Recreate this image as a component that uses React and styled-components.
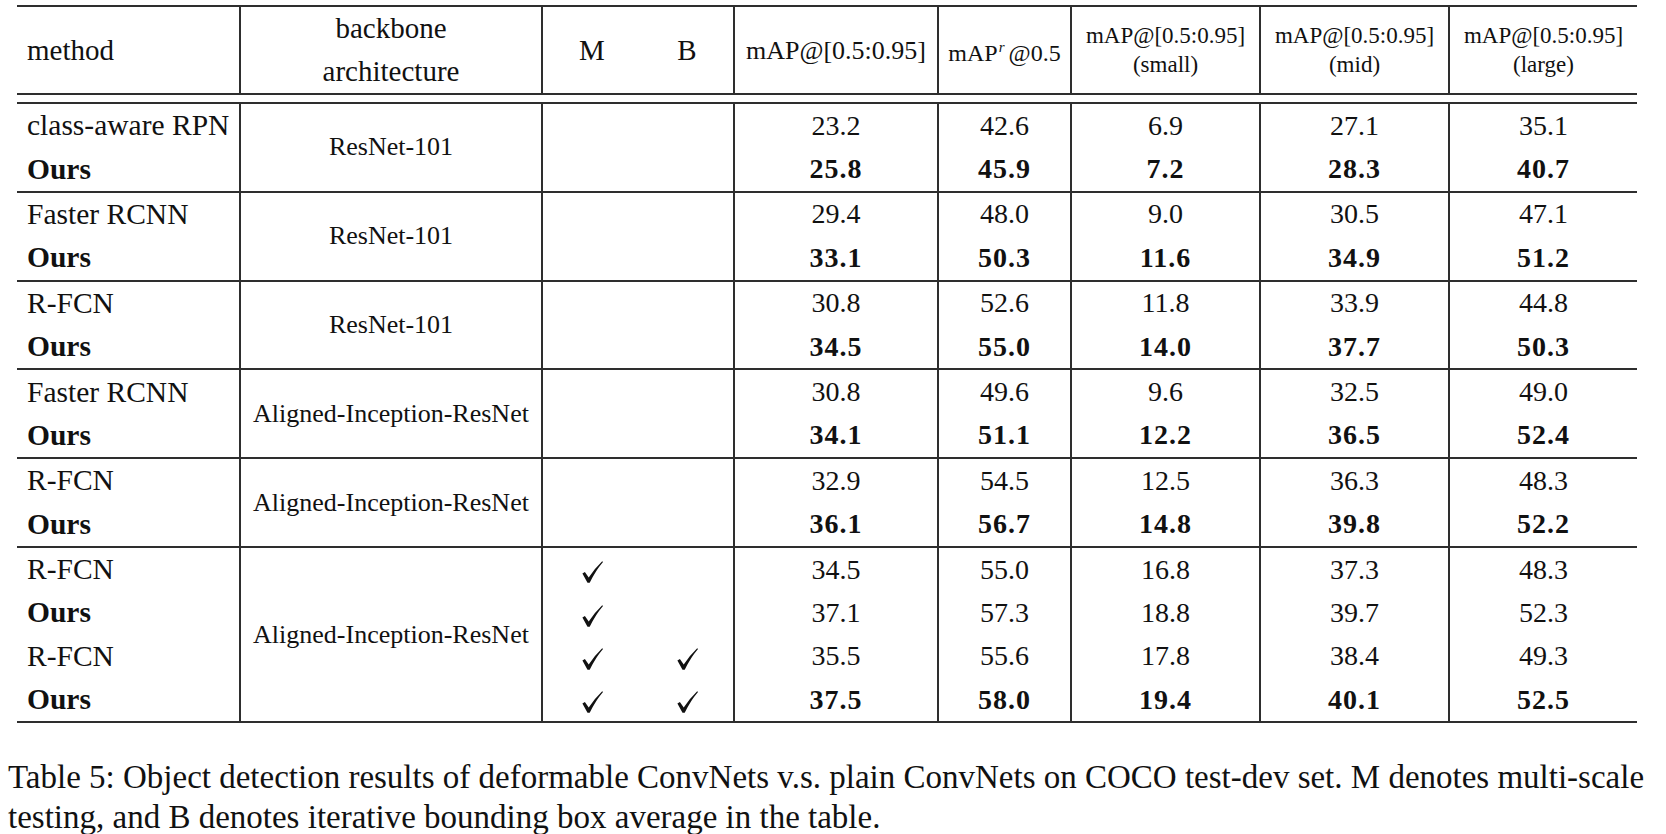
import React from 'react';
import styled, { createGlobalStyle } from 'styled-components';

const GlobalStyle = createGlobalStyle`
  body {
    margin: 0;
    background: #fff;
    color: #111;
    font-family: "Liberation Serif", "Times New Roman", serif;
  }
`

const LINE = '2px solid #2e2e2e';

const Page = styled.div`
  padding: 5px 0 0 8px;
`

const Table = styled.table`
  margin-left: 9px;
  width: 1620px;
  table-layout: fixed;
  border-collapse: separate;
  border-spacing: 0;
`

const HeadCell = styled.th`
  box-sizing: border-box;
  height: 90px;
  padding: 0 ${p => (p.$left ? '10px' : '0')};
  border-top: ${LINE};
  border-bottom: ${LINE};
  border-right: ${p => (p.$noRight ? 'none' : LINE)};
  font-weight: normal;
  font-size: ${p => p.$size || 29}px;
  line-height: ${p => p.$lh || 43}px;
  text-align: ${p => (p.$left ? 'left' : 'center')};
  vertical-align: middle;
  white-space: nowrap;
`

const Spacer = styled.td`
  height: 7px;
  padding: 0;
`

const Cell = styled.td`
  box-sizing: border-box;
  height: ${p => 43.4 + (p.$top ? 2 : 0) + (p.$bottom ? 2 : 0)}px;
  padding: 0 ${p => (p.$left ? '10px' : '0')};
  border-top: ${p => (p.$top ? LINE : 'none')};
  border-bottom: ${p => (p.$bottom ? LINE : 'none')};
  border-right: ${p => (p.$noRight ? 'none' : LINE)};
  font-size: ${p => p.$size || 28}px;
  font-weight: ${p => (p.$bold ? 'bold' : 'normal')};
  letter-spacing: ${p => (p.$bold && !p.$left ? '1px' : '0')};
  text-align: ${p => (p.$left ? 'left' : 'center')};
  vertical-align: middle;
  white-space: nowrap;
`

const Sup = styled.sup`
  font-size: 15px;
  font-style: italic;
  vertical-align: 9px;
  margin: 0 4px 0 1px;
`

const Caption = styled.p`
  margin: 34px 0 0;
  font-size: 33px;
  line-height: 40px;
  white-space: nowrap;
`

const CheckMark = () => (
  <svg width="21" height="22" viewBox="0 0 21 22" style={{ verticalAlign: 'middle' }}>
    <path
      d="M0.4 12.6 L2.9 11.1 L6.7 16.6 Q12 8 20.2 0.2 L21 1 Q13.6 9.6 7.7 21.8 L5.5 21.8 Z"
      fill="#111"
    />
  </svg>
);

const widths = [224, 302, 98, 94, 204, 133, 189, 189, 187];

const groups = [
  {
    backbone: 'ResNet-101',
    rows: [
      { method: 'class-aware RPN', vals: ['23.2', '42.6', '6.9', '27.1', '35.1'] },
      { method: 'Ours', ours: true, bold: true, vals: ['25.8', '45.9', '7.2', '28.3', '40.7'] },
    ],
  },
  {
    backbone: 'ResNet-101',
    rows: [
      { method: 'Faster RCNN', vals: ['29.4', '48.0', '9.0', '30.5', '47.1'] },
      { method: 'Ours', ours: true, bold: true, vals: ['33.1', '50.3', '11.6', '34.9', '51.2'] },
    ],
  },
  {
    backbone: 'ResNet-101',
    rows: [
      { method: 'R-FCN', vals: ['30.8', '52.6', '11.8', '33.9', '44.8'] },
      { method: 'Ours', ours: true, bold: true, vals: ['34.5', '55.0', '14.0', '37.7', '50.3'] },
    ],
  },
  {
    backbone: 'Aligned-Inception-ResNet',
    rows: [
      { method: 'Faster RCNN', vals: ['30.8', '49.6', '9.6', '32.5', '49.0'] },
      { method: 'Ours', ours: true, bold: true, vals: ['34.1', '51.1', '12.2', '36.5', '52.4'] },
    ],
  },
  {
    backbone: 'Aligned-Inception-ResNet',
    rows: [
      { method: 'R-FCN', vals: ['32.9', '54.5', '12.5', '36.3', '48.3'] },
      { method: 'Ours', ours: true, bold: true, vals: ['36.1', '56.7', '14.8', '39.8', '52.2'] },
    ],
  },
  {
    backbone: 'Aligned-Inception-ResNet',
    rows: [
      { method: 'R-FCN', m: true, vals: ['34.5', '55.0', '16.8', '37.3', '48.3'] },
      { method: 'Ours', ours: true, m: true, vals: ['37.1', '57.3', '18.8', '39.7', '52.3'] },
      { method: 'R-FCN', m: true, b: true, vals: ['35.5', '55.6', '17.8', '38.4', '49.3'] },
      { method: 'Ours', ours: true, m: true, b: true, bold: true, vals: ['37.5', '58.0', '19.4', '40.1', '52.5'] },
    ],
  },
];

function App() {
    return (
        <Page>
            <GlobalStyle />
            <Table>
                <colgroup>
                    {widths.map((w, i) => <col key={i} style={{ width: w }} />)}
                </colgroup>
                <thead>
                    <tr>
                        <HeadCell $left>method</HeadCell>
                        <HeadCell>backbone<br />architecture</HeadCell>
                        <HeadCell $noRight>M</HeadCell>
                        <HeadCell>B</HeadCell>
                        <HeadCell $size={26}>mAP@[0.5:0.95]</HeadCell>
                        <HeadCell $size={24}>mAP<Sup>r</Sup>@0.5</HeadCell>
                        <HeadCell $size={23} $lh={29}>mAP@[0.5:0.95]<br />(small)</HeadCell>
                        <HeadCell $size={23} $lh={29}>mAP@[0.5:0.95]<br />(mid)</HeadCell>
                        <HeadCell $size={23} $lh={29} $noRight>mAP@[0.5:0.95]<br />(large)</HeadCell>
                    </tr>
                </thead>
                <tbody>
                    <tr><Spacer colSpan={9} /></tr>
                    {groups.map((g, gi) =>
                        g.rows.map((r, ri) => {
                            const top = ri === 0;
                            const bottom = gi === groups.length - 1 && ri === g.rows.length - 1;
                            return (
                                <tr key={`${gi}-${ri}`}>
                                    <Cell $left $size={29.5} $bold={r.ours} $top={top} $bottom={bottom}>
                                        {r.method}
                                    </Cell>
                                    {top && (
                                        <Cell
                                            rowSpan={g.rows.length}
                                            $size={26}
                                            $top
                                            $bottom={gi === groups.length - 1}
                                            style={{ height: 'auto' }}
                                        >
                                            {g.backbone}
                                        </Cell>
                                    )}
                                    <Cell $noRight $top={top} $bottom={bottom}>
                                        {r.m && <CheckMark />}
                                    </Cell>
                                    <Cell $top={top} $bottom={bottom}>
                                        {r.b && <CheckMark />}
                                    </Cell>
                                    {r.vals.map((v, vi) => (
                                        <Cell
                                            key={vi}
                                            $bold={r.bold}
                                            $top={top}
                                            $bottom={bottom}
                                            $noRight={vi === r.vals.length - 1}
                                        >
                                            {v}
                                        </Cell>
                                    ))}
                                </tr>
                            );
                        })
                    )}
                </tbody>
            </Table>
            <Caption>
                Table 5: Object detection results of deformable ConvNets v.s. plain ConvNets on COCO test-dev set. M denotes multi-scale
                <br />
                testing, and B denotes iterative bounding box average in the table.
            </Caption>
        </Page>
    );
}

export default App;
